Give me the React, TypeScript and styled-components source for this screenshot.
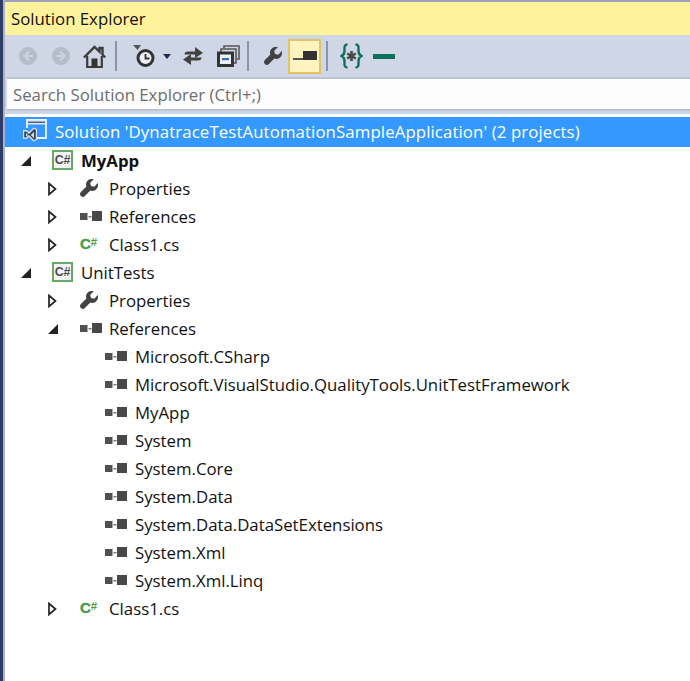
import styled, { createGlobalStyle } from 'styled-components';

const GlobalStyle = createGlobalStyle`
  html, body {
    margin: 0;
    padding: 0;
    background: #fff;
  }
`;

const Window = styled.div`
  width: 690px;
  height: 681px;
  box-sizing: border-box;
  overflow: hidden;
  background: #fff;
  border-left: 3px solid #2d3d66;
  font-family: 'Open Sans', 'Noto Sans', sans-serif;
  font-size: 16.8px;
  color: #1a1a1a;
`;

const Inner = styled.div`
  height: 100%;
  border-left: 2px solid #a9b2c8;
`;

const TitleBar = styled.div`
  height: 33px;
  border-top: 2px solid #9aa3bb;
  background: #fff29d;
  display: flex;
  align-items: center;
  padding-left: 6px;
  color: #111;
`;

const Toolbar = styled.div`
  height: 42px;
  background: #cfd6e5;
  display: flex;
  align-items: center;
  padding-left: 14px;
`;

const Tool = styled.div<{ $ml?: number }>`
  display: flex;
  align-items: center;
  margin-left: ${({ $ml }) => $ml ?? 0}px;
`;

const ToolSep = styled.div<{ $ml: number }>`
  width: 2px;
  height: 30px;
  margin-left: ${({ $ml }) => $ml}px;
  background: #8a94ab;
`;

const ActiveTool = styled.div<{ $ml: number }>`
  box-sizing: border-box;
  width: 33px;
  height: 35px;
  margin-left: ${({ $ml }) => $ml}px;
  border: 2px solid #e5c365;
  background: #fff3c0;
  display: flex;
  align-items: center;
  justify-content: center;
`;

const SearchWrap = styled.div`
  background: #cfd6e5;
  padding: 0 0 3px 2px;
`;

const SearchBox = styled.div`
  height: 30px;
  border-top: 2px solid #bcc3d3;
  border-bottom: 2px solid #bcc3d3;
  background: #fdfdfd;
  display: flex;
  align-items: center;
  padding-left: 6px;
  color: #6d6d6d;
`;

const Tree = styled.div`
  margin-top: 3px;
`;

const Row = styled.div<{ $indent: number; $selected?: boolean; $height?: number }>`
  height: ${({ $height }) => $height ?? 28}px;
  display: flex;
  align-items: center;
  padding-left: ${({ $indent }) => $indent}px;
  background: ${({ $selected }) => ($selected ? '#3399ff' : 'transparent')};
  color: ${({ $selected }) => ($selected ? '#fff' : '#111')};
  white-space: nowrap;
`;

const TwistSlot = styled.span<{ $width: number }>`
  display: flex;
  align-items: center;
  width: ${({ $width }) => $width}px;
  flex: none;
`;

const IconSlot = styled.span<{ $width: number }>`
  display: flex;
  align-items: center;
  width: ${({ $width }) => $width}px;
  flex: none;
  margin-bottom: 3px;
`;

const Label = styled.span<{ $bold?: boolean }>`
  font-weight: ${({ $bold }) => ($bold ? 700 : 400)};
  margin-bottom: 2px;
`;

const SolutionLabel = styled(Label)`
  letter-spacing: 0.11px;
`;

const ProjectBadge = styled.span`
  box-sizing: border-box;
  width: 21px;
  height: 20px;
  border: 2px solid #66a866;
  background: #f4f4f4;
  color: #4c4c4c;
  font: 700 12.5px/16px 'Liberation Sans', sans-serif;
  text-align: center;
  letter-spacing: -0.2px;
`;

const FileBadge = styled.span`
  width: 18px;
  color: #4a9b4a;
  font: 700 15px/18px 'Liberation Sans', sans-serif;
  letter-spacing: -0.2px;
  -webkit-text-stroke: 0.4px #4a9b4a;
`;

const SharpMark = styled.sup`
  font-size: 11.5px;
  line-height: 0;
  vertical-align: 3px;
  -webkit-text-stroke: 0;
`;

function BackIcon({ flip }: { flip?: boolean }) {
  return (
    <svg width="18" height="18" viewBox="0 0 18 18" style={flip ? { transform: 'scaleX(-1)' } : undefined}>
      <circle cx="9" cy="9" r="9" fill="#b6bcc9" />
      <path d="M10 4.500 5.500 9l4.500 4.500M6 9h7.500" fill="none" stroke="#cdd3e0" strokeWidth="2" />
    </svg>
  );
}

function HomeIcon() {
  return (
    <svg width="23" height="23" viewBox="0 0 23 23">
      <path d="M1 12.500 11.500 2l5 4.800V3h3v6.600l2.500 2.900" fill="none" stroke="#3c3c3c" strokeWidth="2.400" />
      <path d="M4.200 11v11h14.600V11" fill="none" stroke="#3c3c3c" strokeWidth="2.200" />
      <rect x="8.500" y="13.500" width="6" height="8.500" fill="#333" />
    </svg>
  );
}

function ClockIcon() {
  return (
    <svg width="22" height="24" viewBox="0 0 22 24">
      <path d="M0 1h8L4.500 6z" fill="#555" />
      <circle cx="12.500" cy="14" r="7.500" fill="#eef0f5" stroke="#333" strokeWidth="3" />
      <path d="M12.500 10v4.500h4" fill="none" stroke="#333" strokeWidth="1.800" />
    </svg>
  );
}

function CaretIcon() {
  return (
    <svg width="8" height="5" viewBox="0 0 8 5">
      <path d="M0 0h8L4 5z" fill="#1e2b4d" />
    </svg>
  );
}

function SwapIcon() {
  return (
    <svg width="20" height="20" viewBox="0 0 20 20">
      <path d="M3 8.500C3 7 4 7 5 7h8" fill="none" stroke="#424242" strokeWidth="3" />
      <path d="M12 1l8 6-8 5z" fill="#424242" />
      <path d="M17 11.500c0 1.500-1 1.500-2 1.500H7" fill="none" stroke="#424242" strokeWidth="3" />
      <path d="M8 8l-8 5.500L8 19z" fill="#424242" />
    </svg>
  );
}

function CollapseIcon() {
  return (
    <svg width="23" height="22" viewBox="0 0 23 22">
      <path d="M7 3V1h15v13h-2" fill="none" stroke="#555" strokeWidth="1.600" />
      <path d="M4 7V4h15v14h-3" fill="none" stroke="#555" strokeWidth="1.600" />
      <rect x="1.500" y="8" width="14" height="12.500" fill="#eef0f5" stroke="#333" strokeWidth="3" />
      <rect x="5" y="13" width="7" height="2.200" fill="#3a6fb5" />
    </svg>
  );
}

function WrenchIcon({ size }: { size: number }) {
  return (
    <svg width={size} height={size} viewBox="0 0 18 18">
      <path
        d="M17.800 4 14.300 7.800 11 7 10.200 3.700 13.800.3C10.500-.8 6 1.200 6 5.500c0 .8.100 1.300.4 2L.9 13c-1.400 1.400-1 3 0 4 1 1 2.600 1.400 4 0l5.500-5.500c.7.300 1.300.4 2.100.4 4.200 0 6.400-4.500 5.300-7.900z"
        fill="#424242"
      />
    </svg>
  );
}

function PendingIcon() {
  return (
    <svg width="24" height="12" viewBox="0 0 24 12">
      <rect x="0" y="8" width="11" height="2" fill="#555" />
      <rect x="10" y="1" width="14" height="9" fill="#333" />
    </svg>
  );
}

function BracesIcon() {
  return (
    <svg width="23" height="26" viewBox="0 0 23 26">
      <path
        d="M7.500 1.500C4 1.500 4.500 4 4.500 8c0 3-1 4-3 5 2 1 3 2 3 5 0 4-.5 6.500 3 6.500M15.500 1.500c3.500 0 3 2.500 3 6.500 0 3 1 4 3 5-2 1-3 2-3 5 0 4 .5 6.500-3 6.500"
        fill="none"
        stroke="#106f5a"
        strokeWidth="2.400"
      />
      <path d="M11.500 8v10M7.200 10.500l8.600 5M15.800 10.500l-8.600 5" stroke="#4a4a4a" strokeWidth="2.600" />
    </svg>
  );
}

function MinusIcon() {
  return (
    <svg width="22" height="5" viewBox="0 0 22 5">
      <rect width="22" height="5" fill="#106f5a" />
    </svg>
  );
}

function SolutionIcon() {
  return (
    <svg width="24" height="23" viewBox="0 0 24 23">
      <path d="M4 9V1h19v18H14" fill="none" stroke="#eef2f8" strokeWidth="1.800" />
      <rect x="4" y="1" width="19" height="4.500" fill="#dfe6f0" />
      <rect x="5" y="2.500" width="17" height="1.500" fill="#54657f" />
      <path d="M0 11h3.500l2.500 2 4.500-4.500L14 10v11l-3.500 1.500L6 18l-2.500 2H0z" fill="#d8e0ec" />
      <path d="M1.200 12.500h2l2.800 2.500 5-5 1.800.8v9.400l-1.800.8-5-5-2.800 2.500h-2zM3 14v4l2-2zM11 13l-3.200 3 3.200 3z" fill="#33445f" fillRule="evenodd" />
    </svg>
  );
}

function Twist({ open }: { open?: boolean }) {
  return open ? (
    <svg width="10" height="10" viewBox="0 0 10 10">
      <path d="M10 0v10H0z" fill="#222" />
    </svg>
  ) : (
    <svg width="9" height="14" viewBox="0 0 9 14">
      <path d="M1 1.500 7.500 7 1 12.500z" fill="#fff" stroke="#222" strokeWidth="1.700" />
    </svg>
  );
}

function RefIcon() {
  return (
    <svg width="22" height="10" viewBox="0 0 22 10">
      <rect x="0" y="2" width="7.500" height="7" fill="#505050" />
      <rect x="8.500" y="5" width="3" height="1.500" fill="#777" />
      <rect x="12" y="0" width="10" height="10" fill="#484848" />
    </svg>
  );
}

const references = [
  'Microsoft.CSharp',
  'Microsoft.VisualStudio.QualityTools.UnitTestFramework',
  'MyApp',
  'System',
  'System.Core',
  'System.Data',
  'System.Data.DataSetExtensions',
  'System.Xml',
  'System.Xml.Linq',
];

function ProjectRow({ name, bold }: { name: string; bold?: boolean }) {
  return (
    <Row $indent={16}>
      <TwistSlot $width={31}>
        <Twist open />
      </TwistSlot>
      <IconSlot $width={29}>
        <ProjectBadge>C#</ProjectBadge>
      </IconSlot>
      <Label $bold={bold}>{name}</Label>
    </Row>
  );
}

function ItemRow({ kind, name, open }: { kind: 'props' | 'refs' | 'file'; name: string; open?: boolean }) {
  return (
    <Row $indent={43}>
      <TwistSlot $width={32}>
        <Twist open={open} />
      </TwistSlot>
      <IconSlot $width={29}>
        {kind === 'props' && <WrenchIcon size={18} />}
        {kind === 'refs' && <RefIcon />}
        {kind === 'file' && (
          <FileBadge>
            C<SharpMark>#</SharpMark>
          </FileBadge>
        )}
      </IconSlot>
      <Label>{name}</Label>
    </Row>
  );
}

export default function App() {
  return (
    <Window>
      <GlobalStyle />
      <Inner>
        <TitleBar>Solution Explorer</TitleBar>
        <Toolbar>
          <Tool>
            <BackIcon />
          </Tool>
          <Tool $ml={15}>
            <BackIcon flip />
          </Tool>
          <Tool $ml={13}>
            <HomeIcon />
          </Tool>
          <ToolSep $ml={9} />
          <Tool $ml={16}>
            <ClockIcon />
          </Tool>
          <Tool $ml={8}>
            <CaretIcon />
          </Tool>
          <Tool $ml={12}>
            <SwapIcon />
          </Tool>
          <Tool $ml={14}>
            <CollapseIcon />
          </Tool>
          <ToolSep $ml={7} />
          <Tool $ml={15}>
            <WrenchIcon size={18} />
          </Tool>
          <ActiveTool $ml={6}>
            <PendingIcon />
          </ActiveTool>
          <ToolSep $ml={5} />
          <Tool $ml={12}>
            <BracesIcon />
          </Tool>
          <Tool $ml={10}>
            <MinusIcon />
          </Tool>
        </Toolbar>
        <SearchWrap>
          <SearchBox>Search Solution Explorer (Ctrl+;)</SearchBox>
        </SearchWrap>
        <Tree>
          <Row $indent={18} $selected $height={30}>
            <IconSlot $width={32}>
              <SolutionIcon />
            </IconSlot>
            <SolutionLabel>Solution 'DynatraceTestAutomationSampleApplication' (2 projects)</SolutionLabel>
          </Row>
          <ProjectRow name="MyApp" bold />
          <ItemRow kind="props" name="Properties" />
          <ItemRow kind="refs" name="References" />
          <ItemRow kind="file" name="Class1.cs" />
          <ProjectRow name="UnitTests" />
          <ItemRow kind="props" name="Properties" />
          <ItemRow kind="refs" name="References" open />
          {references.map((name) => (
            <Row $indent={100} key={name}>
              <IconSlot $width={30}>
                <RefIcon />
              </IconSlot>
              <Label>{name}</Label>
            </Row>
          ))}
          <ItemRow kind="file" name="Class1.cs" />
        </Tree>
      </Inner>
    </Window>
  );
}
